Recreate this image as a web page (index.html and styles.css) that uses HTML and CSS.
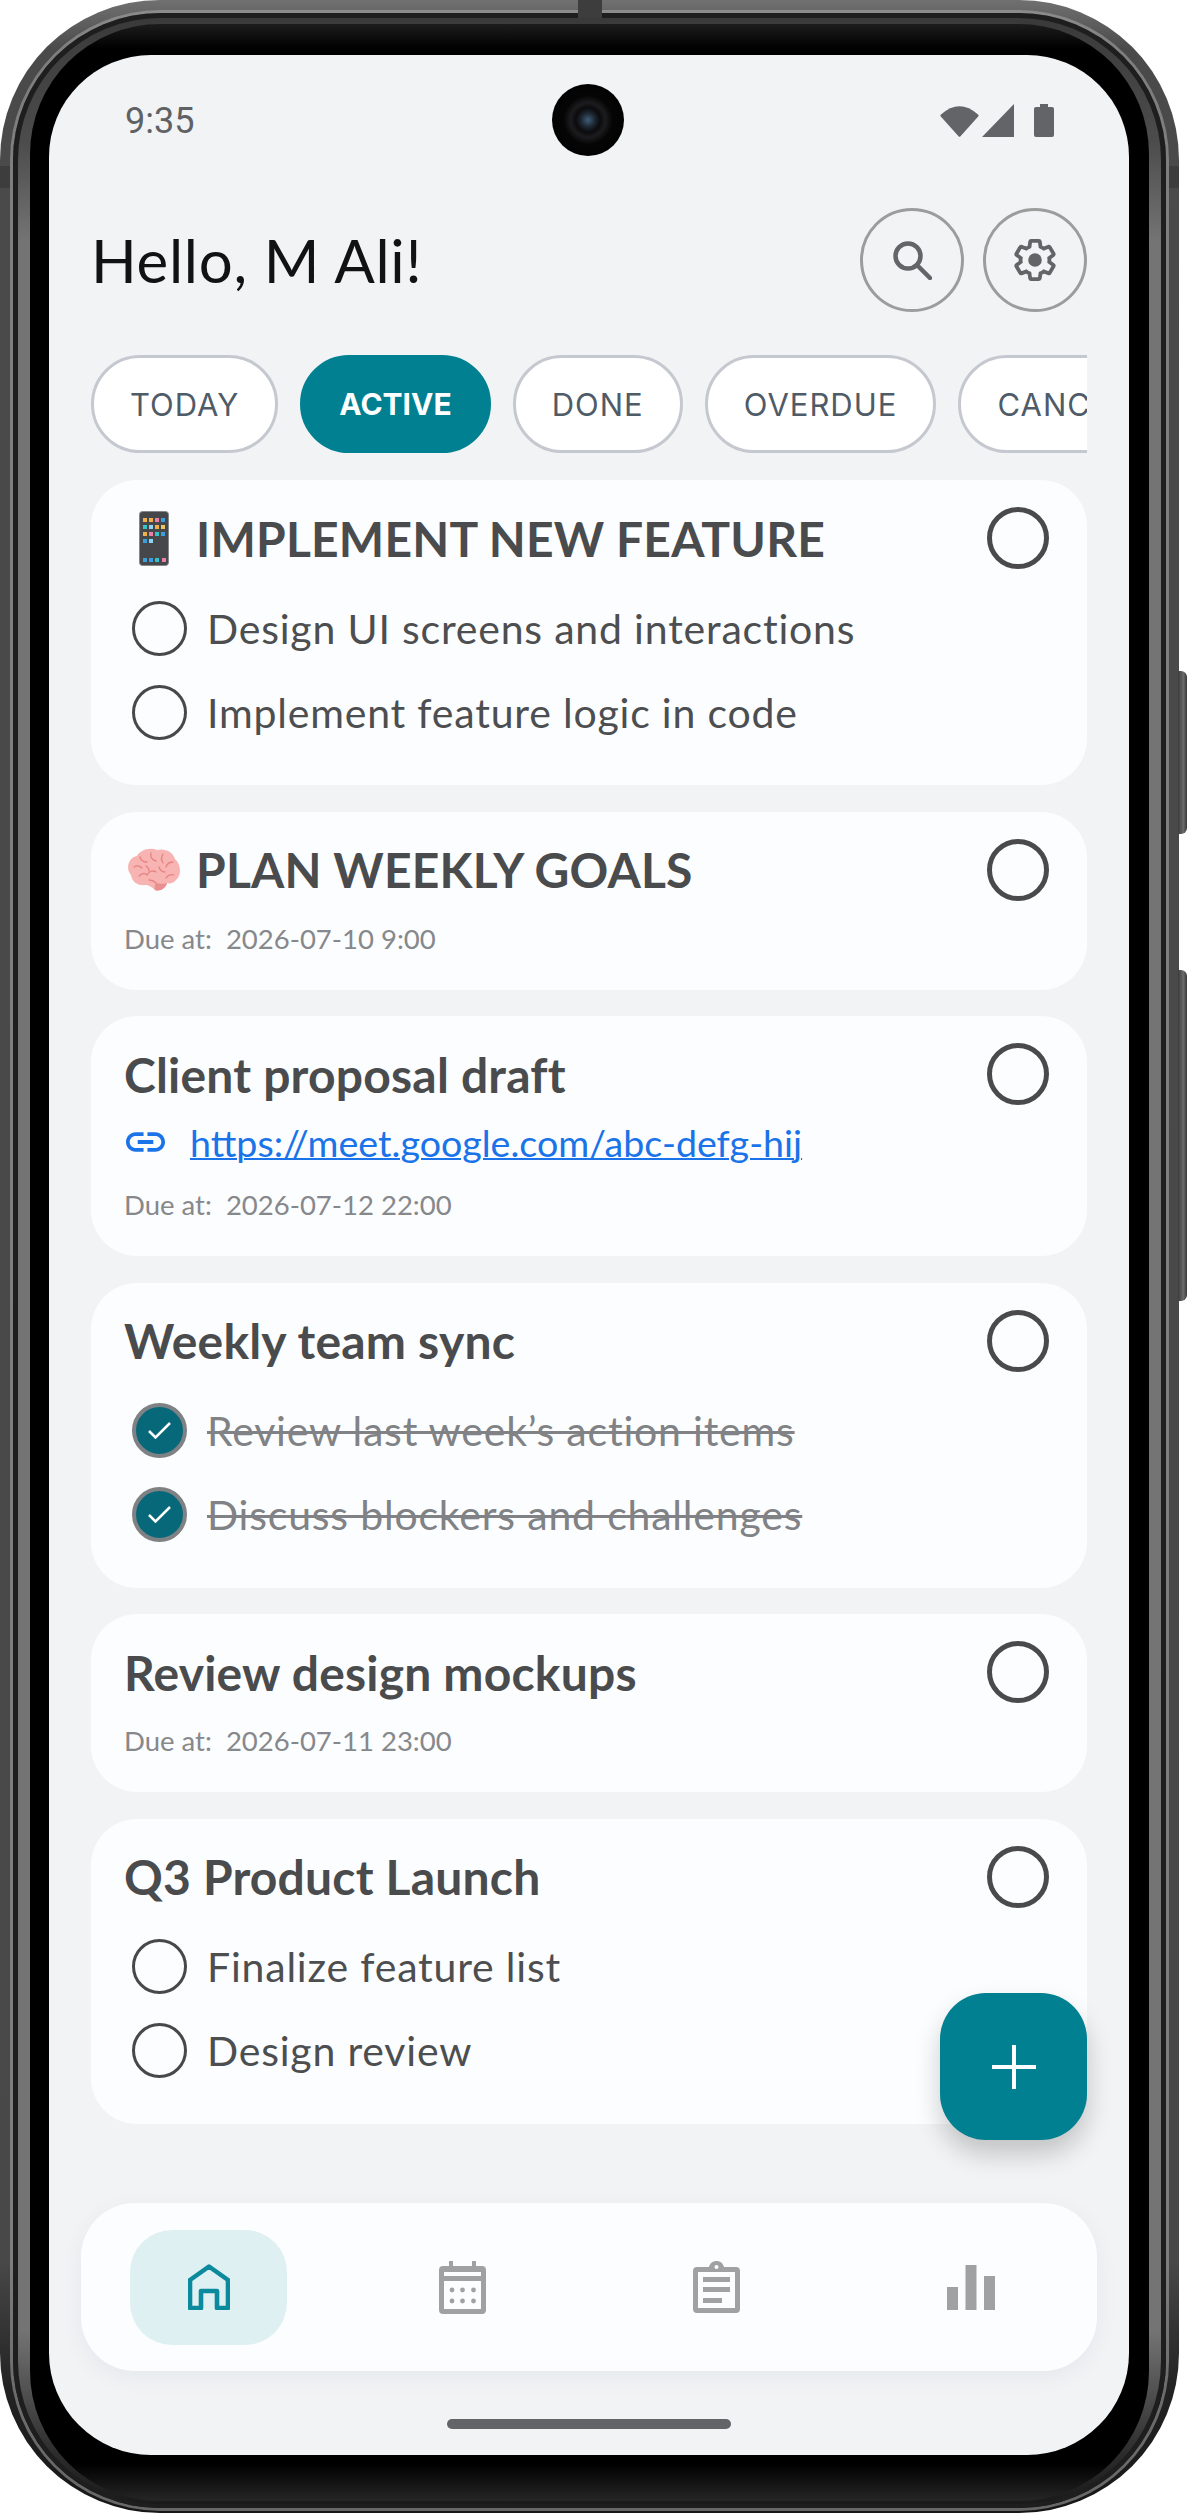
FILE: index.html
```html
<!DOCTYPE html>
<html lang="en">
<head>
    <meta charset="UTF-8">
    <meta name="viewport" content="width=device-width, initial-scale=1.0">
    <title>Tasks</title>
    <link rel="stylesheet" href="styles.css">
</head>
<body>

    <div class="phone">
        <span class="side-btn side-btn-power"></span>
        <span class="side-btn side-btn-volume"></span>
        <span class="antenna antenna-top"></span>
        <span class="antenna antenna-left"></span>
        <span class="antenna antenna-right"></span>

        <div class="rim">
            <div class="bezel">
                <div class="screen">
                    <span class="camera"></span>

                    <!-- Status bar -->
                    <div class="status-bar">
                        <span class="clock">9:35</span>
                        <div class="status-icons">
                            <svg class="icon-wifi" viewBox="0 0 39 33"><path d="M1 10.5Q19.5-6 38 10.5q1 1 .2 2L20.5 32.3q-1 1-2 0L.8 12.5q-.8-1 .2-2z"/></svg>
                            <svg class="icon-signal" viewBox="0 0 32 33"><path d="M0 33 32 0v33z"/></svg>
                            <svg class="icon-battery" viewBox="0 0 20 33"><path d="M6 0h8v3h4q2 0 2 2v26q0 2-2 2H2q-2 0-2-2V5q0-2 2-2h4z"/></svg>
                        </div>
                    </div>

                    <!-- Header -->
                    <header class="top">
                        <h1>Hello, M Ali!</h1>
                        <div class="top-actions">
                            <button class="round-btn">
                                <svg class="icon-search" viewBox="0 0 40 40"><circle cx="16" cy="16" r="12.5"/><path d="M26 26l12 12"/></svg>
                            </button>
                            <button class="round-btn">
                                <svg class="icon-gear" viewBox="0 0 24 24"><path d="M19.14 12.94c.04-.3.06-.61.06-.94 0-.32-.02-.64-.07-.94l2.03-1.58a.49.49 0 0 0 .12-.61l-1.92-3.32a.488.488 0 0 0-.59-.22l-2.39.96c-.5-.38-1.03-.7-1.62-.94l-.36-2.54a.484.484 0 0 0-.48-.41h-3.84c-.24 0-.43.17-.47.41l-.36 2.54c-.59.24-1.13.57-1.62.94l-2.39-.96c-.22-.08-.47 0-.59.22L2.74 8.87c-.12.21-.08.47.12.61l2.03 1.58c-.05.3-.09.63-.09.94s.02.64.07.94l-2.03 1.58a.49.49 0 0 0-.12.61l1.92 3.32c.12.22.37.29.59.22l2.39-.96c.5.38 1.03.7 1.62.94l.36 2.54c.05.24.24.41.48.41h3.84c.24 0 .44-.17.47-.41l.36-2.54c.59-.24 1.13-.56 1.62-.94l2.39.96c.22.08.47 0 .59-.22l1.92-3.32c.12-.22.07-.47-.12-.61l-2.01-1.58z"/><circle class="gear-hub" cx="12" cy="12" r="3.4"/></svg>
                            </button>
                        </div>
                    </header>

                    <!-- Filters -->
                    <nav class="chips">
                        <a class="chip" href="#today">TODAY</a>
                        <a class="chip chip-active" href="#active">ACTIVE</a>
                        <a class="chip" href="#done">DONE</a>
                        <a class="chip" href="#overdue">OVERDUE</a>
                        <a class="chip" href="#cancelled">CANCELLED</a>
                    </nav>

                    <!-- Tasks -->
                    <section class="tasks">

                        <article class="card">
                            <div class="card-head">
                                <h2>
                                    <svg class="emoji-phone" viewBox="0 0 30 55">
                                        <rect x=".5" y=".5" width="29" height="54" rx="3" fill="#46474a" stroke="#85878a"/>
                                        <g fill="#f2b04c"><rect x="4" y="7" width="4" height="4"/><rect x="10" y="7" width="4" height="4"/><rect x="4" y="21" width="4" height="4"/><rect x="16" y="14" width="4" height="4"/></g>
                                        <g fill="#ea7fa8"><rect x="16" y="7" width="4" height="4"/><rect x="10" y="21" width="4" height="4"/><rect x="23" y="47" width="4" height="4"/></g>
                                        <g fill="#3aa0dc"><rect x="22" y="7" width="4" height="4"/><rect x="22" y="21" width="4" height="4"/><rect x="4" y="28" width="4" height="4"/><rect x="4" y="47" width="4" height="4"/><rect x="10" y="47" width="4" height="4"/></g>
                                        <g fill="#35c3c7"><rect x="4" y="14" width="4" height="4"/><rect x="16" y="21" width="4" height="4"/><rect x="16" y="47" width="4" height="4"/></g>
                                        <g fill="#8fd4ee"><rect x="10" y="14" width="4" height="4"/><rect x="10" y="28" width="4" height="4"/></g>
                                        <rect x="22" y="14" width="4" height="4" fill="#e9c65f"/>
                                    </svg>
                                    <span>IMPLEMENT NEW FEATURE</span>
                                </h2>
                                <span class="task-check"></span>
                            </div>
                            <ul class="subtasks">
                                <li><span class="sub-check"></span>Design UI screens and interactions</li>
                                <li><span class="sub-check"></span>Implement feature logic in code</li>
                            </ul>
                        </article>

                        <article class="card">
                            <div class="card-head">
                                <h2>
                                    <svg class="emoji-brain" viewBox="0 0 54 44">
                                        <path d="M4 27C-2 20 2 9 10 8 13 2 23-1 30 2c8-2 16 2 18 9 6 5 7 16 1 21-2 3-6 4-9 3-1 5-7 9-12 7-3-3-6-5-10-5-7 1-13-3-14-10z" fill="#f7b4b2"/>
                                        <path d="M29 35c3 1 9 1 11 0-1 5-7 9-12 7-1-2 0-5 1-7z" fill="#e98f8f"/>
                                        <path d="M7 19c3-2 6-1 8 1M13 9c1 4 4 5 7 5M24 5c-1 4 1 7 5 8M36 6c-2 3-2 6 0 9M46 14c-3 0-6 2-7 5M12 28c3-3 6-3 8-1 2-4 6-5 9-3M32 19c1 3 3 5 6 5M47 27c-3-1-6 0-8 3M22 32c3 0 5 1 7 3M19 18c2 1 3 3 3 5" fill="none" stroke="#e68484" stroke-width="1.3" stroke-linecap="round"/>
                                    </svg>
                                    <span>PLAN WEEKLY GOALS</span>
                                </h2>
                                <span class="task-check"></span>
                            </div>
                            <p class="due">Due at:&nbsp; 2026-07-10 9:00</p>
                        </article>

                        <article class="card">
                            <div class="card-head">
                                <h2>Client proposal draft</h2>
                                <span class="task-check"></span>
                            </div>
                            <div class="link-row">
                                <svg class="icon-link" viewBox="2 7 20 10"><path d="M3.9 12c0-1.71 1.39-3.1 3.1-3.1h4V7H7c-2.76 0-5 2.24-5 5s2.24 5 5 5h4v-1.9H7c-1.71 0-3.1-1.39-3.1-3.1zM8 13h8v-2H8v2zm9-6h-4v1.9h4c1.71 0 3.1 1.39 3.1 3.1s-1.39 3.1-3.1 3.1h-4V17h4c2.76 0 5-2.24 5-5s-2.24-5-5-5z"/></svg>
                                <a href="#meet">https://meet.google.com/abc-defg-hij</a>
                            </div>
                            <p class="due due-link">Due at:&nbsp; 2026-07-12 22:00</p>
                        </article>

                        <article class="card">
                            <div class="card-head">
                                <h2>Weekly team sync</h2>
                                <span class="task-check"></span>
                            </div>
                            <ul class="subtasks">
                                <li class="sub-done"><span class="sub-check"><svg viewBox="0 0 23 17"><path d="M1 9l6.500 6.500L22 1"/></svg></span>Review last week’s action items</li>
                                <li class="sub-done"><span class="sub-check"><svg viewBox="0 0 23 17"><path d="M1 9l6.500 6.500L22 1"/></svg></span>Discuss blockers and challenges</li>
                            </ul>
                        </article>

                        <article class="card">
                            <div class="card-head">
                                <h2>Review design mockups</h2>
                                <span class="task-check"></span>
                            </div>
                            <p class="due">Due at:&nbsp; 2026-07-11 23:00</p>
                        </article>

                        <article class="card">
                            <div class="card-head">
                                <h2>Q3 Product Launch</h2>
                                <span class="task-check"></span>
                            </div>
                            <ul class="subtasks">
                                <li><span class="sub-check"></span>Finalize feature list</li>
                                <li><span class="sub-check"></span>Design review</li>
                            </ul>
                        </article>

                    </section>

                    <button class="fab">
                        <svg viewBox="0 0 44 44"><path d="M20 0h4v20h20v4H24v20h-4V24H0v-4h20z"/></svg>
                    </button>

                    <!-- Bottom menu -->
                    <nav class="bottom-nav">
                        <a class="nav-item nav-item-active" href="#home">
                            <svg class="icon-home" viewBox="0 0 42 46"><path d="M21 2.500 40 16v28H29V27H13v17H2V16z"/></svg>
                        </a>
                        <a class="nav-item" href="#calendar">
                            <svg class="icon-calendar" viewBox="0 0 47 53">
                                <path fill-rule="evenodd" d="M10 0h4v5h19V0h4v5h6q4 0 4 4v40q0 4-4 4H4q-4 0-4-4V9q0-4 4-4h6zM5 11v4h37v-4zM5 20v28h37V20z"/>
                                <circle cx="13" cy="29" r="2.4"/><circle cx="23.5" cy="29" r="2.4"/><circle cx="34.5" cy="29" r="2.4"/>
                                <circle cx="13" cy="40" r="2.4"/><circle cx="23.5" cy="40" r="2.4"/><circle cx="34.5" cy="40" r="2.4"/>
                            </svg>
                        </a>
                        <a class="nav-item" href="#notes">
                            <svg class="icon-notes" viewBox="0 0 47 52">
                                <path fill-rule="evenodd" d="M16 6C17 2 20 0 23.5 0S30 2 31 6h12q4 0 4 4v38q0 4-4 4H4q-4 0-4-4V10q0-4 4-4zM21.500 6a2 2 0 1 0 4 0 2 2 0 1 0-4 0zM5 11v36h37V11z"/>
                                <rect x="10" y="16" width="27" height="5"/><rect x="10" y="26" width="27" height="5"/><rect x="10" y="37" width="19" height="5"/>
                            </svg>
                        </a>
                        <a class="nav-item" href="#stats">
                            <svg class="icon-bars" viewBox="0 0 48 45">
                                <rect y="22" width="11" height="23"/><rect x="18.500" width="11" height="45"/><rect x="37" y="11" width="11" height="34"/>
                            </svg>
                        </a>
                    </nav>

                    <div class="home-bar"></div>
                </div>
            </div>
        </div>
    </div>

</body>
</html>
```

FILE: styles.css
```css
/* Page */
* {
    box-sizing: border-box;
}

body {
    margin: 0;
    background-color: #fff;
    font-family: "Lato", "Noto Sans", sans-serif;
}

/* Device frame */
.phone {
    position: relative;
    width: 1179px;
    height: 2513px;
    padding: 13px 13px 5px;
    border-radius: 160px;
    background: linear-gradient(#707070 0, #4a4a4a 2%, #484848 90%, #232323 95%, #161616 100%);
}

.rim {
    height: 100%;
    padding: 6px 12px 3px;
    border: solid #1e1e1e;
    border-width: 5px 5px 4px;
    border-radius: 147px;
    background: linear-gradient(#3a3a3a 0, #4c4c4c 5%, #747474 9%, #747474 93%, #2c2c2c 98%, #1a1a1a 100%);
    box-shadow: 0 0 0 3px rgba(170, 170, 170, 0.55);
}

.bezel {
    height: 100%;
    padding: 31px 20px 46px 19px;
    border-radius: 130px;
    background: linear-gradient(#1c1c1c 0, #000 1%, #000 98.500%, #262626 100%);
}

.side-btn {
    position: absolute;
    left: 1178px;
    width: 9px;
    border-radius: 0 6px 6px 0;
    background: linear-gradient(90deg, #3c3c3c, #6a6a6a 60%, #3a3a3a);
}

.side-btn-power {
    top: 671px;
    height: 163px;
}

.side-btn-volume {
    top: 970px;
    height: 331px;
}

.antenna {
    position: absolute;
    background-color: #3d3d3d;
}

.antenna-top {
    top: 0;
    left: 578px;
    width: 24px;
    height: 18px;
}

.antenna-left {
    top: 166px;
    left: 0;
    width: 10px;
    height: 22px;
}

.antenna-right {
    top: 166px;
    right: 0;
    width: 10px;
    height: 22px;
}

.screen {
    position: relative;
    display: flex;
    flex-direction: column;
    height: 100%;
    overflow: hidden;
    border-radius: 102px;
    background-color: #f1f3f5;
}

.camera {
    position: absolute;
    top: 29px;
    left: 503px;
    width: 72px;
    height: 72px;
    border-radius: 50%;
    background: radial-gradient(circle at 50% 50%, #3f5e78 0, #1d2630 14%, #0b0b0d 24%, #1c1c1f 34%, #050505 48%, #000 100%);
}

/* Status bar */
.status-bar {
    display: flex;
    flex-shrink: 0;
    justify-content: space-between;
    align-items: center;
    height: 130px;
    padding: 0 75px 0 76px;
}

.clock {
    padding-top: 2px;
    font-family: "Roboto", sans-serif;
    font-size: 36px;
    color: #5f6164;
}

.status-icons {
    display: flex;
    align-items: center;
    gap: 3px;
}

.status-icons svg {
    display: block;
    height: 33px;
    fill: #636467;
}

.icon-wifi {
    width: 39px;
}

.icon-signal {
    width: 32px;
}

.icon-battery {
    width: 20px;
    margin-left: 17px;
}

/* Header */
.top {
    display: flex;
    flex-shrink: 0;
    justify-content: space-between;
    align-items: center;
    margin-top: 23px;
    padding: 0 42px;
}

.top h1 {
    margin: 0;
    font-size: 60px;
    font-weight: 400;
    letter-spacing: 0.7px;
    color: #111213;
}

.top-actions {
    display: flex;
    gap: 19px;
}

.round-btn {
    display: flex;
    justify-content: center;
    align-items: center;
    width: 104px;
    height: 104px;
    padding: 0;
    border: 3px solid #9c9c9c;
    border-radius: 50%;
    background: transparent;
}

.icon-search {
    width: 40px;
    height: 40px;
    fill: none;
    stroke: #636467;
    stroke-width: 4.5;
    stroke-linecap: round;
}

.icon-gear {
    width: 48px;
    height: 48px;
    fill: none;
    stroke: #636467;
    stroke-width: 1.9;
}

.gear-hub {
    fill: #636467;
    stroke: none;
}

/* Chips */
.chips {
    display: flex;
    flex-shrink: 0;
    gap: 22px;
    margin: 43px 42px 0;
    overflow: hidden;
}

.chip {
    display: flex;
    flex-shrink: 0;
    align-items: center;
    height: 98px;
    padding: 0 36px;
    border: 3px solid #c6c8d0;
    border-radius: 49px;
    background-color: #fff;
    font-family: "Inter", sans-serif;
    font-size: 31px;
    letter-spacing: 1px;
    color: #505b68;
    text-decoration: none;
}

.chip-active {
    border-color: #008091;
    background-color: #008091;
    font-size: 30px;
    font-weight: 700;
    letter-spacing: 0;
    color: #fff;
}

/* Task cards */
.tasks {
    display: flex;
    flex: 1;
    flex-direction: column;
    gap: 26.500px;
    min-height: 0;
    margin-top: 27px;
    padding: 0 42px;
}

.card {
    padding: 22px 38px 31px 33px;
    border-radius: 46px;
    background-color: #fcfdfe;
}

.card-head {
    display: flex;
    justify-content: space-between;
    align-items: center;
    height: 72px;
}

.card-head h2 {
    display: flex;
    align-items: center;
    margin: 0;
    font-size: 48px;
    font-weight: 700;
    letter-spacing: 0.2px;
    color: #4a4b4d;
}

.card-head h2 svg {
    display: block;
    flex-shrink: 0;
}

.emoji-phone {
    width: 30px;
    height: 55px;
    margin: 0 27px 0 15px;
}

.emoji-brain {
    width: 54px;
    height: 44px;
    margin: 0 15px 0 3px;
}

.task-check {
    flex-shrink: 0;
    width: 62px;
    height: 62px;
    border: 5px solid #4a4a4c;
    border-radius: 50%;
}

.subtasks {
    margin: 12px 0 0;
    padding: 0;
    list-style: none;
}

.subtasks li {
    display: flex;
    align-items: center;
    gap: 20px;
    height: 84px;
    padding-left: 8px;
    font-size: 41px;
    letter-spacing: 0.8px;
    color: #4d4e50;
}

.sub-check {
    display: flex;
    flex-shrink: 0;
    justify-content: center;
    align-items: center;
    width: 55px;
    height: 55px;
    border: 3px solid #484848;
    border-radius: 50%;
}

.sub-done {
    text-decoration: line-through;
    text-decoration-thickness: 3px;
}

.subtasks .sub-done {
    color: #808285;
}

.sub-done .sub-check {
    border: 4px solid #7e8285;
    background-color: #07687a;
}

.sub-check svg {
    width: 23px;
    height: 17px;
    fill: none;
    stroke: #fff;
    stroke-width: 2.5;
}

.due {
    height: 40px;
    margin: 13px 0 0;
    font-size: 27.500px;
    line-height: 40px;
    color: #87888b;
}

.due-link {
    margin-top: 19px;
}

.link-row {
    display: flex;
    align-items: center;
    gap: 25px;
    height: 48px;
    margin-top: 8px;
    padding-left: 2px;
}

.link-row a {
    font-size: 37.600px;
    color: #1a73e8;
    text-decoration-thickness: 2px;
}

.icon-link {
    width: 39px;
    height: 20px;
    fill: #1a73e8;
}

/* Add button */
.fab {
    position: absolute;
    top: 1938px;
    left: 891px;
    display: flex;
    justify-content: center;
    align-items: center;
    width: 147px;
    height: 147px;
    padding: 0;
    border: 0;
    border-radius: 46px;
    background-color: #008091;
    box-shadow: 0 14px 26px rgba(0, 0, 0, 0.2);
}

.fab svg {
    width: 44px;
    height: 44px;
    fill: #fff;
}

/* Bottom menu */
.bottom-nav {
    display: flex;
    flex-shrink: 0;
    justify-content: space-between;
    align-items: center;
    height: 168px;
    margin: 0 32px;
    padding: 0 48px 0 49px;
    border-radius: 54px;
    background-color: #fcfdfe;
    box-shadow: 0 6px 24px rgba(0, 40, 50, 0.05);
}

.nav-item {
    display: flex;
    justify-content: center;
    align-items: center;
    width: 157px;
    height: 115px;
    border-radius: 42px;
}

.nav-item-active {
    background-color: #dff0f3;
}

.nav-item svg {
    fill: #a0a1a3;
}

.icon-home {
    width: 42px;
    height: 46px;
}

.nav-item .icon-home {
    fill: none;
    stroke: #0a8a9c;
    stroke-width: 4.6;
    stroke-linejoin: round;
}

.icon-calendar {
    width: 47px;
    height: 53px;
}

.icon-notes {
    width: 47px;
    height: 52px;
}

.icon-bars {
    width: 48px;
    height: 45px;
}

.home-bar {
    flex-shrink: 0;
    width: 284px;
    height: 10px;
    margin: 48px auto 26px;
    border-radius: 5px;
    background-color: #636467;
}
```
